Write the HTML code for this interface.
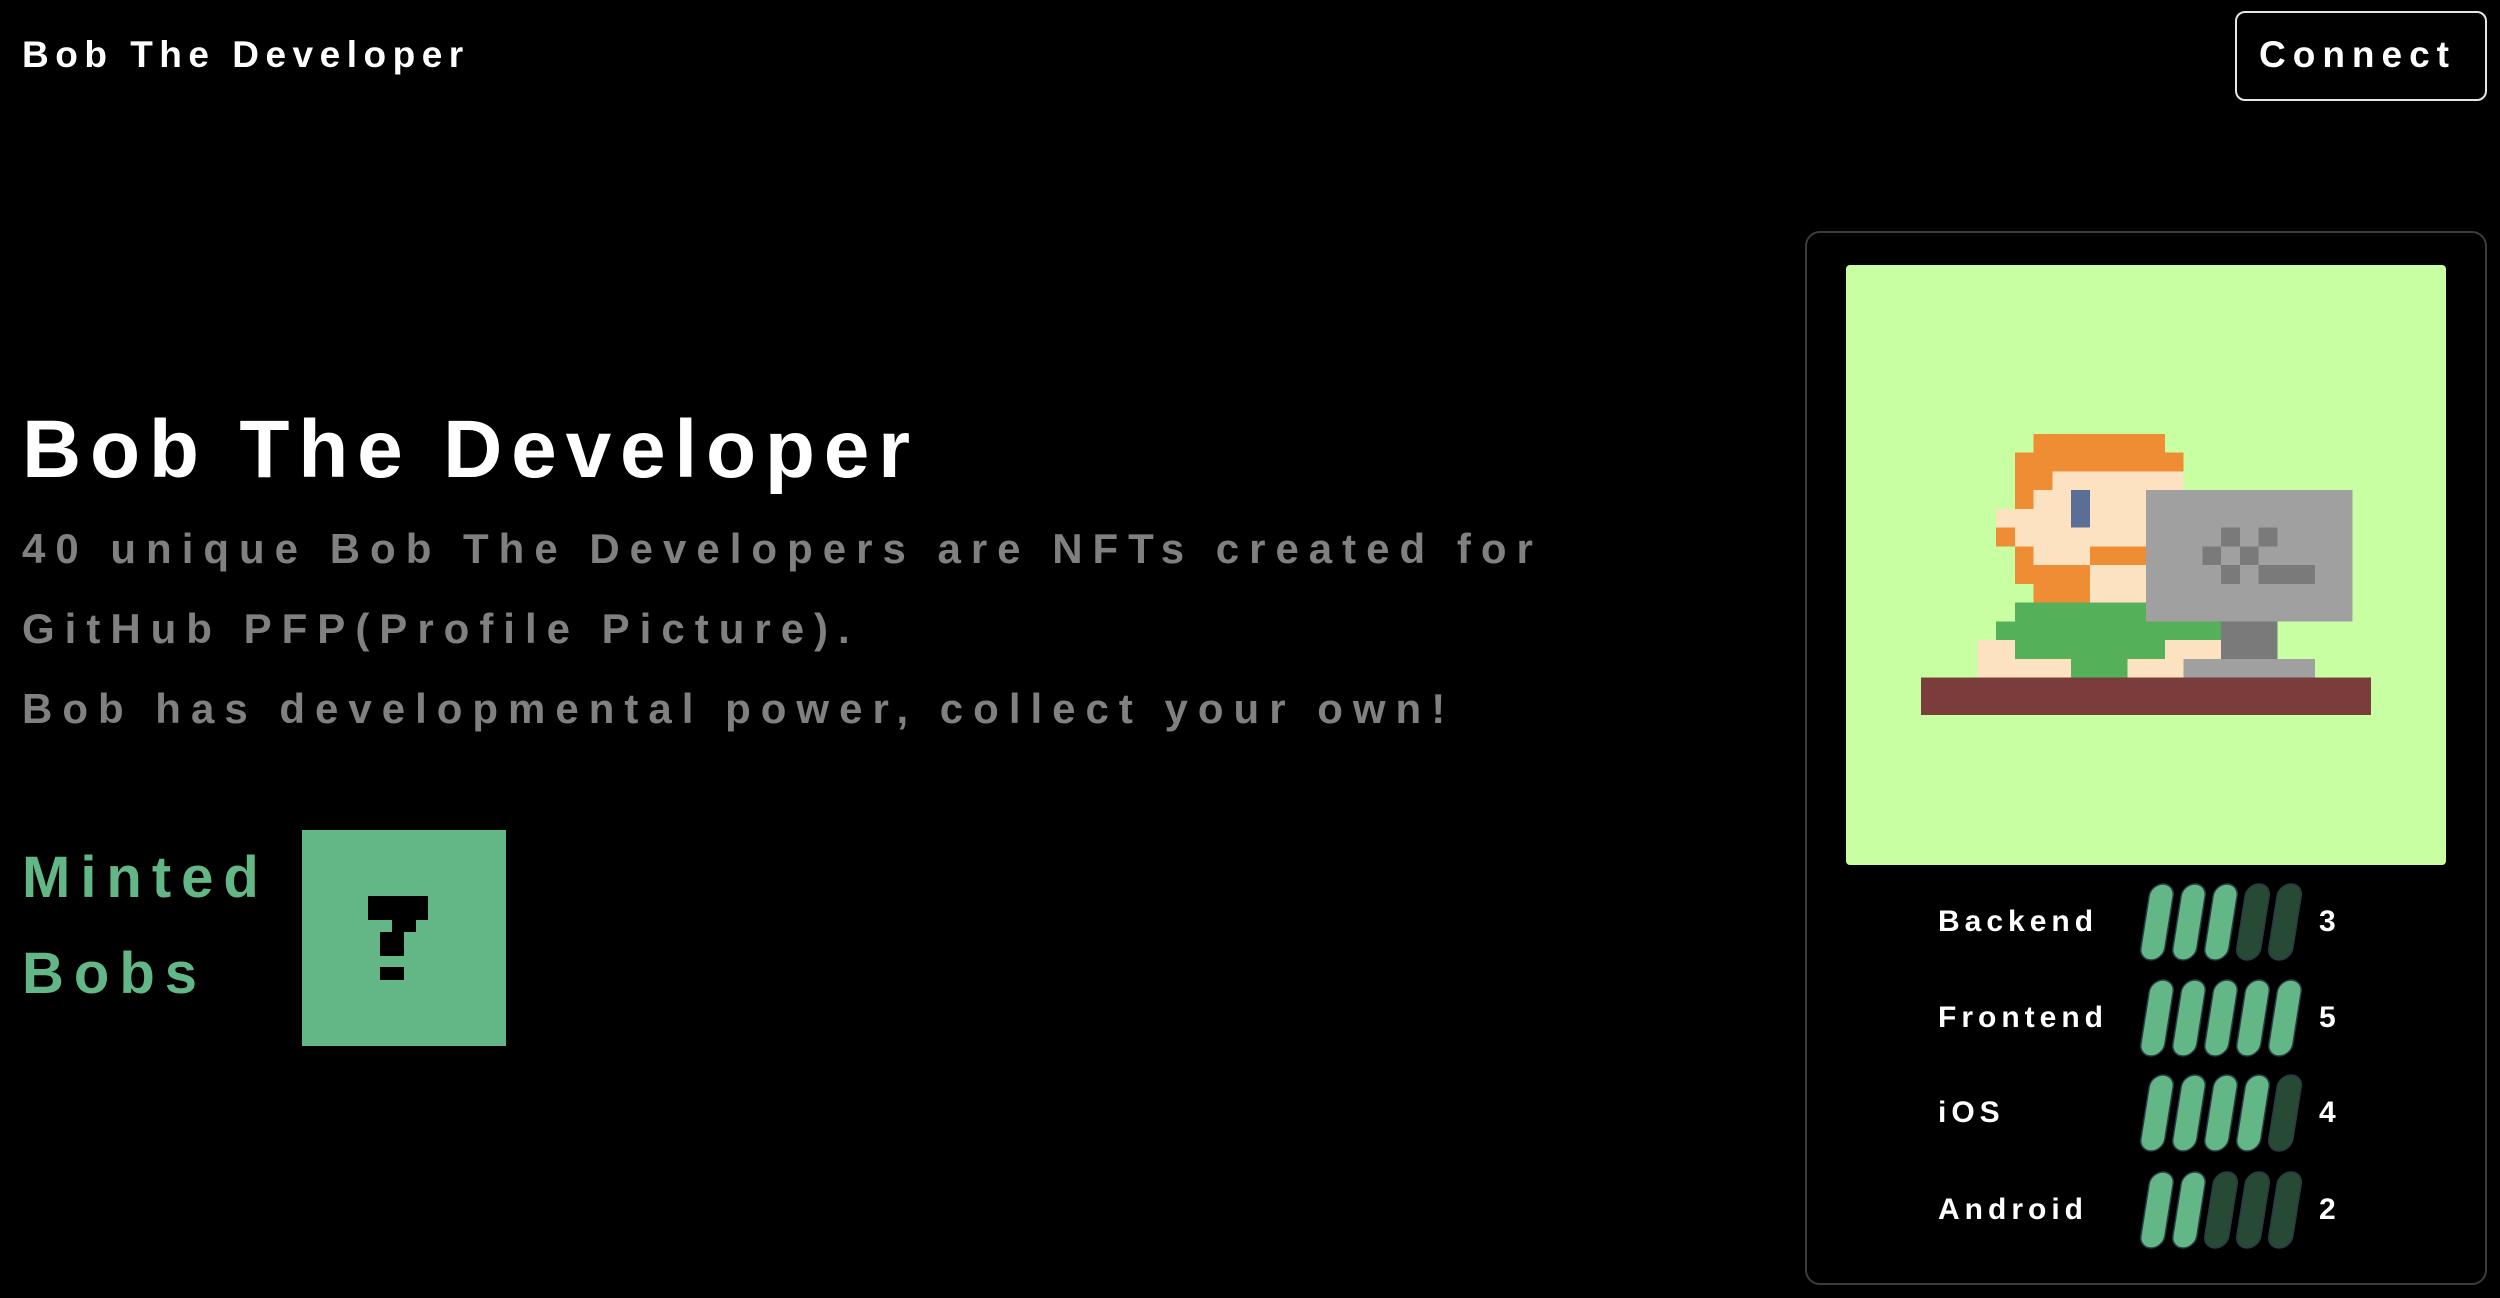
<!DOCTYPE html>
<html><head><meta charset="utf-8"><style>
*{margin:0;padding:0;box-sizing:border-box}
body{width:2500px;height:1298px;background:#000;position:relative;overflow:hidden;font-family:"Liberation Sans",sans-serif;font-weight:bold}
.a{position:absolute;white-space:nowrap}
</style></head><body>
<div class="a" style="left:22px;top:30px;font-size:37px;line-height:50px;letter-spacing:6.5px;color:#fff">Bob The Developer</div>
<div class="a" style="left:2235px;top:11px;width:252px;height:90px;border:2px solid #e6e6e6;border-radius:10px"></div>
<div class="a" style="left:2259px;top:30px;font-size:37px;line-height:50px;letter-spacing:7px;color:#fff">Connect</div>

<div class="a" style="left:22px;top:410px;font-size:82px;line-height:80px;letter-spacing:8.8px;color:#fff">Bob The Developer</div>
<div class="a" style="left:22px;top:509px;font-size:42px;line-height:80px;letter-spacing:10px;color:#808080">40 unique Bob The Developers are NFTs created for<br>GitHub PFP(Profile Picture).<br>Bob has developmental power, collect your own!</div>

<div class="a" style="left:22px;top:830px;font-size:58px;line-height:96px;letter-spacing:10px;color:#63b685">Minted<br>Bobs</div>
<div class="a" style="left:302px;top:830px;width:204px;height:216px;background:#63b685"></div>
<div class="a" style="left:368px;top:896px;width:60px;height:24px;background:#000"></div>
<div class="a" style="left:392px;top:920px;width:24px;height:12px;background:#000"></div>
<div class="a" style="left:380px;top:932px;width:24px;height:24px;background:#000"></div>
<div class="a" style="left:380px;top:967px;width:24px;height:13px;background:#000"></div>

<div class="a" style="left:1805px;top:231px;width:682px;height:1054px;border:2px solid #3c3c3c;border-radius:15px"></div>
<svg class="a" style="left:1846px;top:265px;border-radius:4px" width="600" height="600" viewBox="0 0 32 32" shape-rendering="crispEdges">
<rect width="32" height="32" fill="#c8ffa2"/>
<g fill="#ef8d35">
<rect x="10" y="9" width="7" height="1"/><rect x="9" y="10" width="9" height="1"/>
<rect x="9" y="11" width="2" height="1"/><rect x="9" y="12" width="1" height="1"/>
<rect x="8" y="14" width="1" height="1"/><rect x="9" y="15" width="1" height="1"/>
<rect x="13" y="15" width="3" height="1"/><rect x="9" y="16" width="4" height="1"/>
<rect x="10" y="17" width="3" height="1"/></g>
<g fill="#fde2c2">
<rect x="11" y="11" width="7" height="1"/><rect x="10" y="12" width="7" height="1"/>
<rect x="8" y="13" width="8" height="1"/><rect x="9" y="14" width="7" height="1"/>
<rect x="10" y="15" width="3" height="1"/><rect x="13" y="16" width="3" height="2"/>
<rect x="7" y="20" width="2" height="1"/><rect x="17" y="20" width="3" height="1"/>
<rect x="7" y="21" width="5" height="1"/><rect x="15" y="21" width="3" height="1"/></g>
<rect x="12" y="12" width="1" height="2" fill="#5a6e96"/>
<g fill="#55b05a">
<rect x="9" y="18" width="7" height="1"/><rect x="8" y="19" width="12" height="1"/>
<rect x="9" y="20" width="8" height="1"/><rect x="12" y="21" width="3" height="1"/></g>
<rect x="16" y="12" width="11" height="7" fill="#a0a0a0"/>
<rect x="18" y="21" width="7" height="1" fill="#a0a0a0"/>
<g fill="#7a7a7a">
<rect x="20" y="19" width="3" height="2"/>
<rect x="20" y="14" width="1" height="1"/><rect x="22" y="14" width="1" height="1"/>
<rect x="19" y="15" width="1" height="1"/><rect x="21" y="15" width="1" height="1"/>
<rect x="20" y="16" width="1" height="1"/><rect x="22" y="16" width="3" height="1"/></g>
<rect x="4" y="22" width="24" height="2" fill="#7b3c3c"/>
</svg>

<div class="a" style="left:1938px;top:902px;font-size:30px;line-height:40px;letter-spacing:5px;color:#fff">Backend</div>
<div class="a" style="left:1938px;top:998px;font-size:30px;line-height:40px;letter-spacing:5px;color:#fff">Frontend</div>
<div class="a" style="left:1938px;top:1093px;font-size:30px;line-height:40px;letter-spacing:5px;color:#fff">iOS</div>
<div class="a" style="left:1938px;top:1190px;font-size:30px;line-height:40px;letter-spacing:5px;color:#fff">Android</div>
<div class="a" style="left:2319px;top:902px;font-size:30px;line-height:40px;color:#fff">3</div>
<div class="a" style="left:2319px;top:998px;font-size:30px;line-height:40px;color:#fff">5</div>
<div class="a" style="left:2319px;top:1093px;font-size:30px;line-height:40px;color:#fff">4</div>
<div class="a" style="left:2319px;top:1190px;font-size:30px;line-height:40px;color:#fff">2</div>

<svg class="a" style="left:2130px;top:870px" width="180" height="410" viewBox="0 0 180 410">
<defs><rect id="p" x="-12" y="-38" width="24" height="76" rx="12" stroke="#2a3a48" stroke-width="1.5"/></defs>
<g transform="translate(0,52)">
<use href="#p" transform="translate(27,0) skewX(-9)" fill="#63b685"/>
<use href="#p" transform="translate(59,0) skewX(-9)" fill="#63b685"/>
<use href="#p" transform="translate(91,0) skewX(-9)" fill="#63b685"/>
<use href="#p" transform="translate(123,0) skewX(-9)" fill="#264a33"/>
<use href="#p" transform="translate(155,0) skewX(-9)" fill="#264a33"/>
</g>
<g transform="translate(0,148)">
<use href="#p" transform="translate(27,0) skewX(-9)" fill="#63b685"/>
<use href="#p" transform="translate(59,0) skewX(-9)" fill="#63b685"/>
<use href="#p" transform="translate(91,0) skewX(-9)" fill="#63b685"/>
<use href="#p" transform="translate(123,0) skewX(-9)" fill="#63b685"/>
<use href="#p" transform="translate(155,0) skewX(-9)" fill="#63b685"/>
</g>
<g transform="translate(0,243)">
<use href="#p" transform="translate(27,0) skewX(-9)" fill="#63b685"/>
<use href="#p" transform="translate(59,0) skewX(-9)" fill="#63b685"/>
<use href="#p" transform="translate(91,0) skewX(-9)" fill="#63b685"/>
<use href="#p" transform="translate(123,0) skewX(-9)" fill="#63b685"/>
<use href="#p" transform="translate(155,0) skewX(-9)" fill="#264a33"/>
</g>
<g transform="translate(0,340)">
<use href="#p" transform="translate(27,0) skewX(-9)" fill="#63b685"/>
<use href="#p" transform="translate(59,0) skewX(-9)" fill="#63b685"/>
<use href="#p" transform="translate(91,0) skewX(-9)" fill="#264a33"/>
<use href="#p" transform="translate(123,0) skewX(-9)" fill="#264a33"/>
<use href="#p" transform="translate(155,0) skewX(-9)" fill="#264a33"/>
</g>
</svg>
</body></html>
